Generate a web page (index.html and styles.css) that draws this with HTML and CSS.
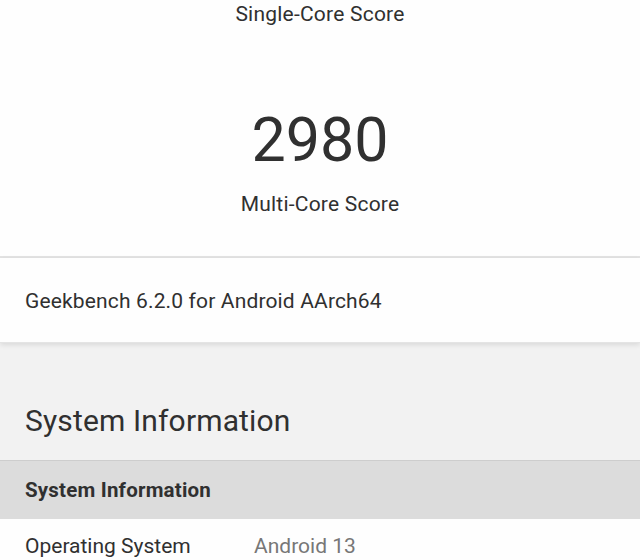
FILE: index.html
```html
<!DOCTYPE html>
<html>
<head>
<meta charset="utf-8">
<link rel="stylesheet" href="styles.css">
</head>
<body>
  <section class="scores">
    <div class="label">Single-Core Score</div>
    <div class="score">2980</div>
    <div class="label">Multi-Core Score</div>
  </section>
  <section class="version">Geekbench 6.2.0 for Android AArch64</section>
  <section class="info">
    <h2 class="info-title">System Information</h2>
    <div class="table">
      <div class="table-head">System Information</div>
      <div class="row">
        <span class="key">Operating System</span>
        <span class="value">Android 13</span>
      </div>
    </div>
  </section>
</body>
</html>
```
FILE: styles.css
```css
html, body {
  margin: 0;
  padding: 0;
}
body {
  background: #f2f2f2;
  font-family: Roboto, "Noto Sans", sans-serif;
  color: #303030;
  width: 640px;
  height: 560px;
  overflow: hidden;
}
.scores {
  background: #fefefe;
  text-align: center;
  padding-bottom: 38px;
  border-bottom: 2px solid #e3e3e3;
}
.label {
  font-size: 21px;
  line-height: 28px;
  letter-spacing: 0.22px;
}
.score {
  font-size: 61px;
  line-height: 72px;
  margin-top: 76px;
  margin-bottom: 14px;
}
.version {
  background: #fefefe;
  font-size: 21px;
  letter-spacing: 0.15px;
  line-height: 28px;
  padding: 29px 25px 27px;
  border-bottom: 1px solid #e4e4e4;
  box-shadow: 0 2px 5px rgba(0, 0, 0, 0.10);
  position: relative;
}
.info-title {
  margin: 0;
  font-weight: 400;
  font-size: 30px;
  letter-spacing: 0.15px;
  line-height: 36px;
  padding: 60px 25px 21px;
}
.table-head {
  background: #dcdcdc;
  border-top: 1px solid #cdcdcd;
  font-size: 20.5px;
  letter-spacing: 0.2px;
  font-weight: 700;
  line-height: 28px;
  padding: 15px 25px;
}
.row {
  background: #fefefe;
  display: flex;
  font-size: 21px;
  line-height: 28px;
  padding: 13px 25px 12px;
}
.key {
  width: 229px;
}
.value {
  color: #777;
}
```
